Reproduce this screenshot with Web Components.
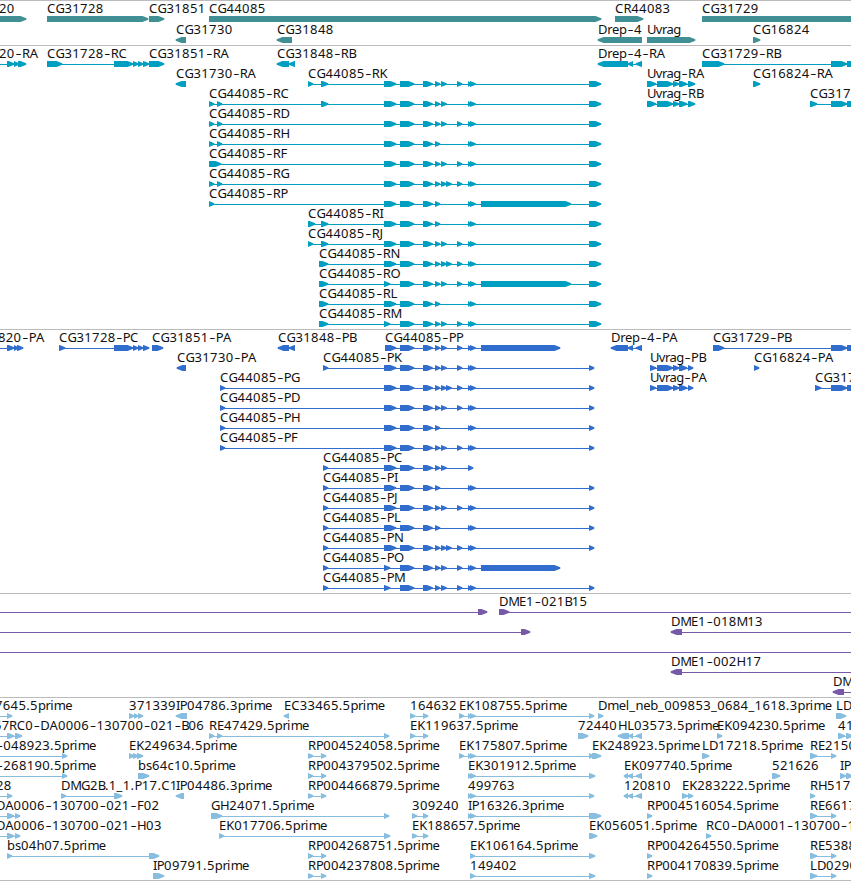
<!DOCTYPE html>
<html lang="en">
<head>
<meta charset="utf-8">
<title>Genome browser</title>
<style>
  body {
    margin: 0;
    background: #fff;
    font-family: "Noto Sans", "Open Sans", sans-serif;
    font-size: 13px;
    color: #000;
  }
</style>
</head>
<body>
<genome-view>
  <genome-track name="gene" lane="21" style="--track-color: #3f8f94; --track-gap: 2px"></genome-track>
  <genome-track name="transcript" style="--track-color: #009fc1"></genome-track>
  <genome-track name="cds" style="--track-color: #316dcd"></genome-track>
  <genome-track name="clone" style="--track-color: #7759a8"></genome-track>
  <genome-track name="est" style="--track-color: #87bedf; --track-gap: 2px"></genome-track>
</genome-view>

<script>
// exons shared by the CG44085 isoforms
const EXONS = {
  A: '384:396', a: '384:390', B: '400:414', C: '423:432.5', D: '435:440', E: '441:446.5',
  F: '446:451.5', G: '457:462', H: '468:471 470:475.5', L: '481:571', l: '481:560',
  Z: '589:601', z: '589:594'
};

// one line per lane, features separated by ";"
// feature: label | label x (empty = first block) | blocks, "<" first for the minus strand
const TRACKS = {
  gene: `
20|-1|-20:26; CG31728||47:148; CG31851||149:164; CG44085||209:601; CR44083||615:643; CG31729||702:880
CG31730||< 176:186; CG31848||< 277:292; Drep-4||< 598:642; Uvrag||647:695; CG16824||753:760`,
  transcript: `
20-RA|-1|-20:-10 7:14 14:19 18:26; CG31728-RC||47:62 114:133 133:138 138:143 143:149; CG31851-RA||149:164; CG31848-RB||< 277:289 289:295; Drep-4-RA||< 598:628 628:633 636:642; CG31729-RB||702:724 831:847 847:870
CG31730-RA||< 176:186; CG44085-RK||308:313 321:328 A B C D E G H Z; Uvrag-RA||647:656 657:673 673:679 679:687 688:695; CG16824-RA||753:760
CG44085-RC||209:214 217:222 321:328 A B C D E H Z; Uvrag-RB||647:656 657:673 673:679 679:687 688:695; CG3172||810:817 831:847 847:870
CG44085-RD||209:214 217:222 A B C D E G H Z
CG44085-RH||209:214 217:222 A B C D H Z
CG44085-RF||209:221 A B C D E G H Z
CG44085-RG||209:214 217:222 A B C D E F G H Z
CG44085-RP||209:214 A B C D H L Z
CG44085-RI||308:315 321:328 A B C D H Z
CG44085-RJ||308:313 321:328 A B C D E G H Z
CG44085-RN||319:328 A B C D E F G H Z
CG44085-RO||319:328 a B C D E G H L Z
CG44085-RL||319:328 A B C D H Z
CG44085-RM||319:328 a B C D E G H Z`,
  cds: `
820-PA|-2|-20:-10 7:14 14:18 17:23; CG31728-PC||59:65 114:133 133:138 138:143 143:149; CG31851-PA||152:163; CG31848-PB||< 278:289 289:295; CG44085-PP||385:396 B C D E G H l; Drep-4-PA||< 611:628 628:633 636:642; CG31729-PB||713:724 831:847 847:870
CG31730-PA||< 177:186; CG44085-PK||323:328 A B C D E G H z; Uvrag-PB||650:656 657:673 673:679 679:687 688:693; CG16824-PA||754:759
CG44085-PG||220:225 A B C D E F G H z; Uvrag-PA||650:656 657:673 673:679 679:687 688:693; CG317||815:821 831:847 847:870
CG44085-PD||220:225 A B C D E G H z
CG44085-PH||220:225 A B C D H z
CG44085-PF||220:225 A B C D E G H z
CG44085-PC||323:328 A B C D E 468:473
CG44085-PI||323:328 A B C D H z
CG44085-PJ||323:328 A B C D E G H z
CG44085-PL||323:328 A B C D H z
CG44085-PN||323:328 A B C D E F G H z
CG44085-PO||323:328 a B C D E G H l
CG44085-PM||323:328 a B C D E G H z`,
  clone: `
||-20:-10 478:487; DME1-021B15||499:509 870:880
||-20:-10 521:530; DME1-018M13||< 671:682 870:880
||-20:-10 870:880
DME1-002H17||< 671:682 870:880
DM||< 833:844 870:880`,
  est: `
7645.5prime|-5|-20:-10 7:12; 371339||129:134 134:138 138:143; IP04786.3prime||< 176:187; EC33465.5prime||< 284:289; 164632||410:415 423:428; EK108755.5prime||459:464 H 589:594; Dmel_neb_009853_0684_1618.3prime||598:603; LD||836:846
57|-6|-20:-10 7:12; RC0-DA0006-130700-021-B06|9|7:14 15:22; RE47429.5prime||209:214 217:222 384:389; EK119637.5prime||410:415 423:428; 72440||578:588; HL03573.5prime|618|< 618:629 629:633 636:642; EK094230.5prime||717:722; 41||838:845 846:853
-048923.5prime|-4|-20:-10 62:67; EK249634.5prime||129:134 133:138 137:143; RP004524058.5prime||308:313 321:326; EK175807.5prime||459:464 H 589:594; EK248923.5prime||592:601; LD17218.5prime||702:709; RE2150||810:817 831:836
-268190.5prime|-4|-20:-10 62:67; bs64c10.5prime||138:149; RP004379502.5prime||308:313 321:326; EK301912.5prime||H 589:595; EK097740.5prime||< 624:628 628:633 636:642; 521626||772:780; IP||840:846 846:853
28|-4|-20:-10 7:12; DMG2B.1_1.P17.C1||61:66 114:122; IP04486.3prime||< 176:184; RP004466879.5prime||308:313 321:326; 499763||H 589:594; 120810||< 624:628 628:633 636:642; EK283222.5prime||682:688 688:693; RH517||810:815
DA0006-130700-021-F02|-4|-20:-10 7:14 15:20; GH24071.5prime||211:222 384:389; 309240||412:417 423:428; IP16326.3prime||H 589:601; RP004516054.5prime||647:652; RE6617||810:817 831:836
DA0006-130700-021-H03|-4|-20:-10 7:14 15:20; EK017706.5prime||219:224 384:390; EK188657.5prime||412:417 423:428; EK056051.5prime||589:597; RC0-DA0001-130700-1||706:711
bs04h07.5prime||7:12 149:159; RP004268751.5prime||308:313 321:326; EK106164.5prime||470:475 589:595; RP004264550.5prime||647:652; RE5388||810:817 831:836
IP09791.5prime||153:164; RP004237808.5prime||308:313 321:326; 149402||470:475 589:595; RP004170839.5prime||647:652; LD0290||810:817 831:836`
};

// label advances in px, digits are the default
const DIGIT = 7.8;
const ADVANCE = {
  A: 8.4, B: 7.2, C: 8.4, D: 9.2, E: 7.2, F: 6.9, G: 9, H: 9.2, I: 3.7, J: 3.7, K: 8, L: 6.8,
  M: 10.6, N: 9.3, O: 9.4, P: 7.3, R: 7.8, U: 8.6, '-': 7.3, '.': 3.9, _: 6.2,
  a: 6.8, b: 7.8, c: 6.5, e: 7, g: 7.5, h: 7.7, i: 3.6, l: 3.6, m: 11.4, n: 7.7, p: 7.7,
  r: 4.6, s: 6, v: 6.2
};

function labelXs(label, x) {
  return [...label].map(ch => {
    const at = ch === '-' ? x + 0.8 : x;
    x += ADVANCE[ch] || DIGIT;
    return at.toFixed(1);
  }).join(' ');
}

const viewTemplate = document.createElement('template');
viewTemplate.innerHTML = `
  <style>
  :host {
    display: flex;
    flex-direction: column;
    width: 851px;
    height: 881px;
    overflow: hidden;
  }
  .end {
    height: 1px;
    background: #bbb;
  }
  </style>
  <slot></slot>
  <div class="end"></div>
`;

class GenomeView extends HTMLElement {
  constructor() {
    super();
    this.attachShadow({ mode: 'open' });
    this.shadowRoot.appendChild(viewTemplate.content.cloneNode(true));
  }
}

const trackTemplate = document.createElement('template');
trackTemplate.innerHTML = `
  <style>
  :host {
    display: flex;
    flex-direction: column;
    flex: none;
    border-top: 1px solid #bbb;
    padding-bottom: var(--track-gap, 3px);
  }
  </style>
`;

class GenomeTrack extends HTMLElement {
  constructor() {
    super();
    this.attachShadow({ mode: 'open' });
    this.shadowRoot.appendChild(trackTemplate.content.cloneNode(true));
  }

  connectedCallback() {
    const rows = TRACKS[this.getAttribute('name')].trim().split('\n');
    rows.forEach(row => {
      const lane = document.createElement('track-lane');
      lane.style.height = (this.getAttribute('lane') || 20) + 'px';
      lane.features = row.split(';').map(f => f.trim());
      this.shadowRoot.appendChild(lane);
    });
  }
}

const laneTemplate = document.createElement('template');
laneTemplate.innerHTML = `
  <style>
  :host {
    display: block;
    flex: none;
  }
  svg {
    display: block;
    width: 851px;
    height: 100%;
    overflow: visible;
  }
  .glyph {
    fill: var(--track-color);
  }
  text {
    fill: #111;
  }
  .dash {
    font-size: 19px;
    font-weight: 300;
  }
  </style>
  <svg></svg>
`;

class TrackLane extends HTMLElement {
  constructor() {
    super();
    this.attachShadow({ mode: 'open' });
    this.shadowRoot.appendChild(laneTemplate.content.cloneNode(true));
  }

  connectedCallback() {
    this.shadowRoot.querySelector('svg').innerHTML = this.features.map(f => this.draw(f)).join('');
  }

  draw(feature) {
    const [label, labelX, shape] = feature.split('|');
    const minus = shape.startsWith('<');
    const blocks = shape.replace('<', '').trim().split(' ')
      .map(b => EXONS[b] || b).join(' ').split(' ')
      .map(b => b.split(':').map(Number));
    const start = blocks[0][0];
    const end = blocks[blocks.length - 1][1];
    let out = '';

    // intron line under the blocks
    if (blocks.length > 1) {
      out += `<rect class="glyph" x="${start}" y="18" width="${end - start - 2}" height="1"/>`;
    }
    blocks.forEach(([a, b]) => {
      const head = Math.min(5.5, b - a);
      const points = minus
        ? `${b},15 ${a + head},15 ${a - 0.3},17.3 ${a - 0.3},18.7 ${a + head},21 ${b},21`
        : `${a},15 ${b - head},15 ${b + 0.3},17.3 ${b + 0.3},18.7 ${b - head},21 ${a},21`;
      out += `<polygon class="glyph" points="${points}"/>`;
    });
    if (label) {
      const x = labelX ? Number(labelX) : start + 0.1;
      // hyphens are set larger and lowered, so that they come out wide
      const chars = label.replace(/-/g, '<tspan class="dash" y="13.4">-</tspan>');
      out += `<text x="${labelXs(label, x)}" y="12">${chars.replace(/<\/tspan>([^<]+)/g, '</tspan><tspan y="12">$1</tspan>')}</text>`;
    }
    return out;
  }
}

window.customElements.define('track-lane', TrackLane);
window.customElements.define('genome-track', GenomeTrack);
window.customElements.define('genome-view', GenomeView);
</script>
</body>
</html>
